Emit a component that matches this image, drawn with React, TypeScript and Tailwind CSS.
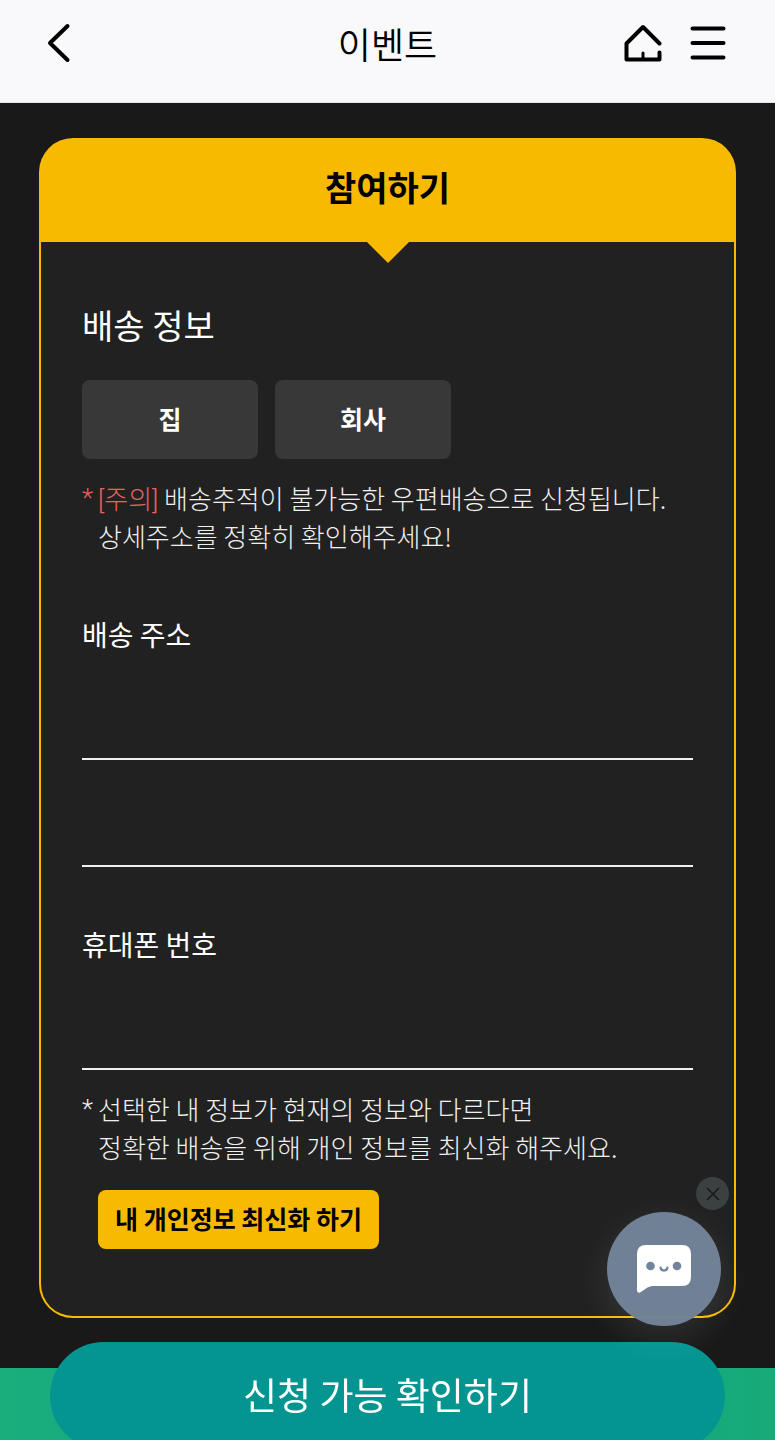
import { useState } from 'react';

function BackIcon() {
    return (
        <svg width="24" height="40" viewBox="0 0 24 40" fill="none" stroke="#000" strokeWidth="4" strokeLinecap="round" strokeLinejoin="round">
            <path d="M20.5 3 L3 20 L20.5 37" />
        </svg>
    );
}

function HomeIcon() {
    return (
        <svg width="38" height="38" viewBox="0 0 38 38" fill="none" stroke="#000" strokeWidth="4" strokeLinecap="round" strokeLinejoin="round">
            <path d="M35.5 19.5 L19 3 L2.5 19.5 V35.5 H35.5 V28.5" />
            <path d="M19 29 V34" strokeWidth="3" />
        </svg>
    );
}

function MenuIcon() {
    return (
        <svg width="36" height="34" viewBox="0 0 36 34" fill="none" stroke="#000" strokeWidth="4" strokeLinecap="round">
            <path d="M2.5 2.5 H33.5 M2.5 17 H33.5 M2.5 31.5 H33.5" />
        </svg>
    );
}

function ChatIcon() {
    return (
        <svg width="54" height="48" viewBox="0 0 54 48" fill="none">
            <path
                d="M9 0 H45 Q54 0 54 9 V32 Q54 41 45 41 H16 Q13 41 10.5 42.5 L3 47.5 Q0 48.5 0 45 V9 Q0 0 9 0 Z"
                fill="#fff"
            />
            <circle cx="13.5" cy="21" r="4.3" fill="#728499" />
            <circle cx="40" cy="21" r="4.3" fill="#728499" />
            <path d="M23.5 22.5 Q24 25.5 27 25.5 Q30 25.5 30.5 22.5" stroke="#728499" strokeWidth="2.2" strokeLinecap="round" />
        </svg>
    );
}

const places = ['집', '회사'];

export default function App() {
    const [place, setPlace] = useState('');
    const [address, setAddress] = useState('');
    const [detail, setDetail] = useState('');
    const [phone, setPhone] = useState('');
    const [chatOpen, setChatOpen] = useState(true);

    return (
        <div className="min-h-screen bg-[#191919] font-['Noto_Sans_CJK_KR',sans-serif] text-white">
            <header className="grid h-[103px] grid-cols-[1fr_auto_1fr] items-center border-b border-[#e4e4e4] bg-[#f9f9fb] px-[47px] pb-4 text-black">
                <button type="button" aria-label="뒤로" className="justify-self-start">
                    <BackIcon />
                </button>
                <h1 className="text-[36px] leading-[48px] font-[350]">이벤트</h1>
                <div className="mr-0.5 flex items-center gap-7 justify-self-end">
                    <a href="#home" aria-label="홈">
                        <HomeIcon />
                    </a>
                    <button type="button" aria-label="메뉴">
                        <MenuIcon />
                    </button>
                </div>
            </header>

            <main className="px-[39px] pt-[35px] pb-[122px]">
                <section>
                    <h2 className="h-[104px] rounded-t-[34px] bg-[#f8ba00] pt-[25px] text-center text-[34px] leading-[48px] font-bold text-black">
                        참여하기
                    </h2>
                    <div className="rounded-b-[34px] border-x-2 border-b-2 border-[#f8ba00] bg-[#212121]">
                        <svg className="mx-auto block" width="42" height="21" viewBox="0 0 42 21">
                            <path d="M0 0 H42 L21 21 Z" fill="#f8ba00" />
                        </svg>

                        <form className="px-[41px] pt-[38px] pb-[67px]" onSubmit={(e) => e.preventDefault()}>
                            <h3 className="text-[34px] leading-[48px] font-normal">배송 정보</h3>

                            <div className="mt-[31px] flex gap-[17px]">
                                {places.map((name) => (
                                    <button
                                        key={name}
                                        type="button"
                                        aria-pressed={place === name}
                                        onClick={() => setPlace(name)}
                                        className="h-[79px] w-44 rounded-lg bg-[#383838] pb-1 text-[25px] leading-[36px] font-bold"
                                    >
                                        {name}
                                    </button>
                                ))}
                            </div>

                            <div className="mt-5 flex gap-1 text-[26px] leading-[38px] font-light text-[#f0f0f0]">
                                <span className="w-3 font-['Roboto',sans-serif] text-[#ee5f5f]">*</span>
                                <p>
                                    <span className="font-['Roboto','Noto_Sans_CJK_KR',sans-serif] leading-none text-[#ee5f5f]">[주의]</span>{' '}
                                    배송추적이 불가능한 우편배송으로 신청됩니다.
                                    <br />
                                    상세주소를 정확히 확인해주세요!
                                </p>
                            </div>

                            <label htmlFor="address" className="mt-[59px] block text-[28px] leading-[40px]">
                                배송 주소
                            </label>
                            <input
                                id="address"
                                type="text"
                                value={address}
                                onChange={(e) => setAddress(e.target.value)}
                                className="mt-[25px] block h-[81px] w-full border-b-2 border-[#f0f0f0] bg-transparent text-[28px] outline-none"
                            />
                            <input
                                type="text"
                                aria-label="상세 주소"
                                value={detail}
                                onChange={(e) => setDetail(e.target.value)}
                                className="mt-[26px] block h-[81px] w-full border-b-2 border-[#f0f0f0] bg-transparent text-[28px] outline-none"
                            />

                            <label htmlFor="phone" className="mt-[57px] block text-[28px] leading-[40px]">
                                휴대폰 번호
                            </label>
                            <input
                                id="phone"
                                type="tel"
                                value={phone}
                                onChange={(e) => setPhone(e.target.value)}
                                className="mt-[25px] block h-[81px] w-full border-b-2 border-[#f0f0f0] bg-transparent text-[28px] outline-none"
                            />

                            <div className="mt-5 flex gap-1 text-[26px] leading-[38px] font-light text-[#f0f0f0]">
                                <span className="w-3 font-['Roboto',sans-serif]">*</span>
                                <p>
                                    선택한 내 정보가 현재의 정보와 다르다면
                                    <br />
                                    정확한 배송을 위해 개인 정보를 최신화 해주세요.
                                </p>
                            </div>

                            <button
                                type="button"
                                className="mt-6 ml-4 h-[59px] rounded-lg bg-[#f8ba00] px-[17px] pb-1 text-[25px] leading-[36px] font-bold text-black"
                            >
                                내 개인정보 최신화 하기
                            </button>
                        </form>
                    </div>
                </section>
            </main>

            {/* Submit bar */}
            <footer className="fixed inset-x-0 bottom-0 h-[72px] bg-linear-to-r from-[#1aae7c] via-[#0aa08a] to-[#18ab78] px-[50px]">
                <button
                    type="button"
                    className="-mt-[26px] block h-[108px] w-full rounded-full bg-[#059591] pb-1 text-[37px] leading-[48px] font-normal"
                >
                    신청 가능 확인하기
                </button>
            </footer>

            {/* Floating chat */}
            {chatOpen && (
                <div className="fixed right-[46px] bottom-[114px] flex flex-col items-end">
                    <button
                        type="button"
                        aria-label="채팅 닫기"
                        onClick={() => setChatOpen(false)}
                        className="mb-0.5 flex size-[33px] items-center justify-center rounded-full bg-[#3b4041]"
                    >
                        <svg width="14" height="14" viewBox="0 0 14 14" fill="none" stroke="#17191a" strokeWidth="1.6">
                            <path d="M1 1 L13 13 M13 1 L1 13" />
                        </svg>
                    </button>
                    <button
                        type="button"
                        aria-label="채팅 상담"
                        className="mr-2 flex size-[114px] items-center justify-center rounded-full bg-[#728499]/98 shadow-[0_12px_36px_rgba(255,255,255,0.1)]"
                    >
                        <ChatIcon />
                    </button>
                </div>
            )}
        </div>
    );
}
